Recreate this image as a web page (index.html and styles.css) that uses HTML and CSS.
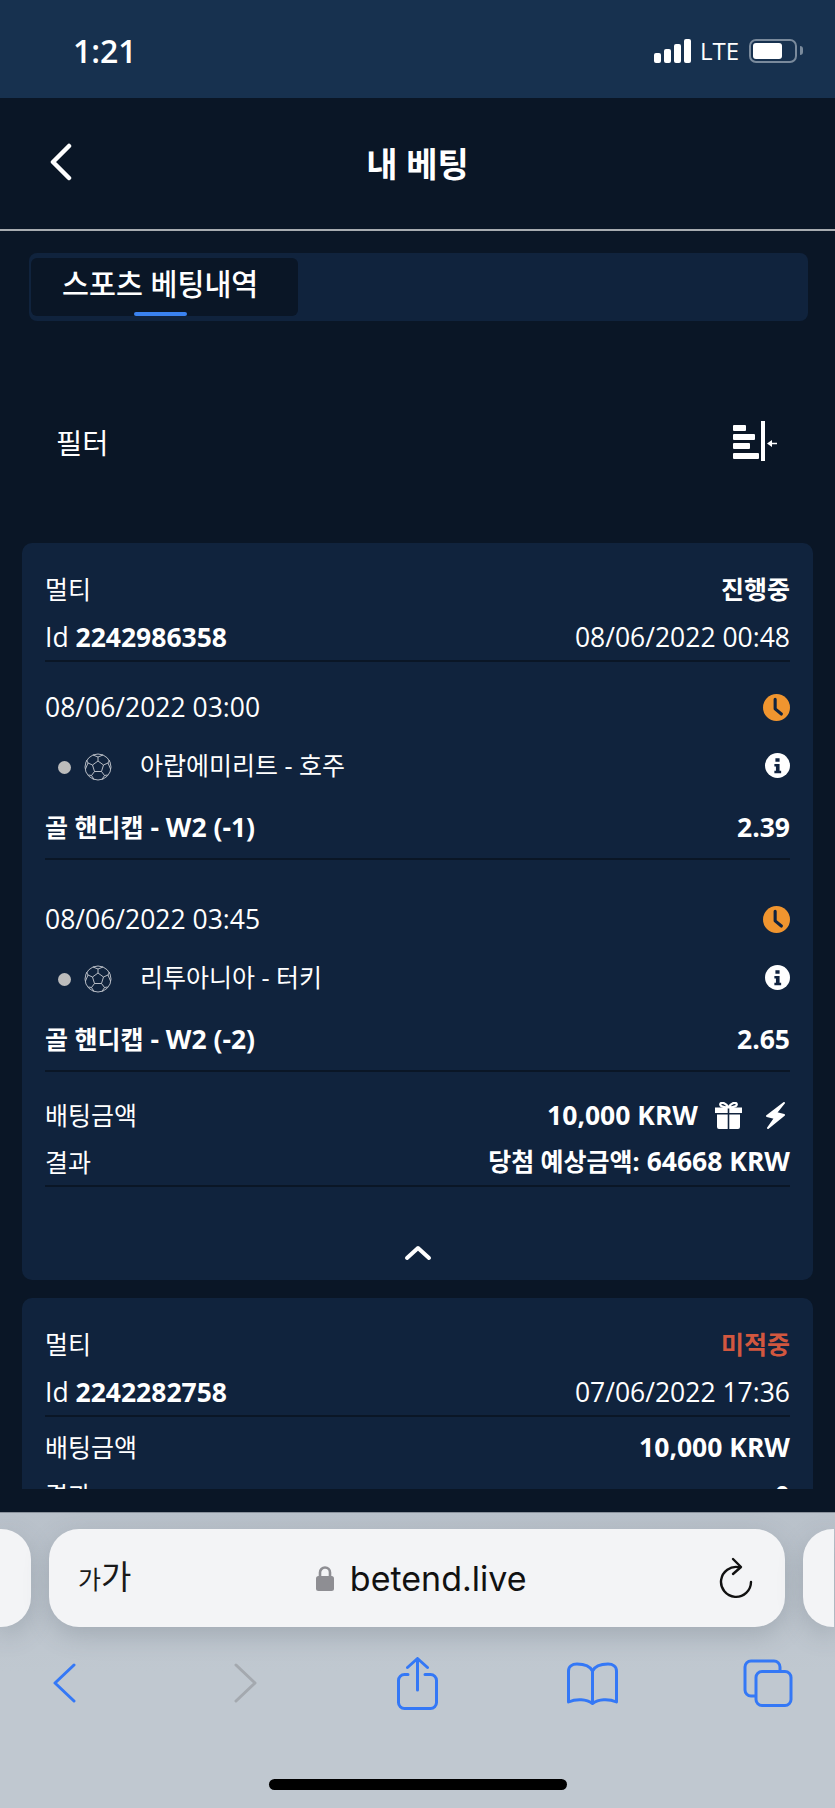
FILE: index.html
```html
<!doctype html>
<html lang="ko">

<head>
    <meta charset="UTF-8">
    <title>내 베팅</title>
    <link rel="stylesheet" href="styles.css">
</head>

<body>
    <div class="phone">
        <div class="status">
            <span class="time">1:21</span>
            <div class="status-right">
                <span class="signal"><i class="s1"></i><i class="s2"></i><i class="s3"></i><i class="s4"></i></span>
                <span class="lte">LTE</span>
                <span class="battery"><i></i></span>
                <span class="battery-cap"></span>
            </div>
        </div>

        <div class="nav">
            <svg class="nav-back" width="24" height="38" viewBox="0 0 24 38"><path d="M20 3 4 19l16 16" fill="none" stroke="#fff" stroke-width="4.500" stroke-linecap="round" stroke-linejoin="round"/></svg>
            <span class="nav-title">내 베팅</span>
        </div>

        <div class="content">
            <div class="scroll">
                <div class="tabs">
                    <div class="tab-on">스포츠 베팅내역<i></i></div>
                </div>

                <div class="filter">
                    <span>필터</span>
                    <svg width="46" height="42" viewBox="0 0 46 42" fill="#fff">
                        <rect x="1" y="5" width="13" height="6" rx="1"/>
                        <rect x="1" y="14" width="22" height="6" rx="1"/>
                        <rect x="1" y="23" width="17" height="6" rx="1"/>
                        <rect x="1" y="33" width="26" height="6" rx="1"/>
                        <rect x="29" y="1" width="4" height="40"/>
                        <path d="M35 23.500 40 20v2.700h5v1.600h-5V27z"/>
                    </svg>
                </div>

                <div class="card">
                    <div class="row"><span class="ko">멀티</span><b class="ko">진행중</b></div>
                    <div class="row row-id"><span>Id <b>2242986358</b></span><span>08/06/2022 00:48</span></div>
                    <div class="line"></div>

                    <div class="row match-date first-match"><span>08/06/2022 03:00</span>
                        <svg class="clock" width="27" height="27" viewBox="0 0 26 26"><circle cx="13" cy="13" r="13" fill="#f0952f"/><path d="M11.700 5v9.300l6 5" fill="none" stroke="#102340" stroke-width="3" stroke-linecap="round" stroke-linejoin="round"/></svg>
                    </div>
                    <div class="row match-team">
                        <span class="team">
                            <i class="dot"></i>
                            <svg class="ball" width="28" height="28" viewBox="0 0 28 28" fill="none" stroke="#c8ccd2" stroke-width=".9"><circle cx="14" cy="14" r="13"/><path d="m14 8 5.500 4-2 6.500h-7l-2-6.500zM14 8V4M19.500 12l4.500-2M17.500 18.500l3 4M10.500 18.500l-3 4M8.500 12 4 10M9 2l5 2 5-2M1.500 16 4 10l-1.500-3M26.500 16 24 10l1.500-3M7.500 22.500l-3-.5M7.500 22.500l2.500 4M20.500 22.500l3-.5M20.500 22.500l-2.500 4"/></svg>
                            <span class="team-name ko">아랍에미리트 - 호주</span>
                        </span>
                        <svg class="info" width="25" height="25" viewBox="0 0 24 24"><circle cx="12" cy="12" r="12" fill="#fff"/><path d="M10 5h4v3.500h-4zM9 10.500h5V17h1.500v2.500h-6.500V17h1.500v-4H9z" fill="#102340"/></svg>
                    </div>
                    <div class="row match-market"><b><span class="ko">골 핸디캡</span> - W2 (-1)</b><b>2.39</b></div>
                    <div class="line"></div>

                    <div class="row match-date next-match"><span>08/06/2022 03:45</span>
                        <svg class="clock" width="27" height="27" viewBox="0 0 26 26"><circle cx="13" cy="13" r="13" fill="#f0952f"/><path d="M11.700 5v9.300l6 5" fill="none" stroke="#102340" stroke-width="3" stroke-linecap="round" stroke-linejoin="round"/></svg>
                    </div>
                    <div class="row match-team">
                        <span class="team">
                            <i class="dot"></i>
                            <svg class="ball" width="28" height="28" viewBox="0 0 28 28" fill="none" stroke="#c8ccd2" stroke-width=".9"><circle cx="14" cy="14" r="13"/><path d="m14 8 5.500 4-2 6.500h-7l-2-6.500zM14 8V4M19.500 12l4.500-2M17.500 18.500l3 4M10.500 18.500l-3 4M8.500 12 4 10M9 2l5 2 5-2M1.500 16 4 10l-1.500-3M26.500 16 24 10l1.500-3M7.500 22.500l-3-.5M7.500 22.500l2.500 4M20.500 22.500l3-.5M20.500 22.500l-2.500 4"/></svg>
                            <span class="team-name ko">리투아니아 - 터키</span>
                        </span>
                        <svg class="info" width="25" height="25" viewBox="0 0 24 24"><circle cx="12" cy="12" r="12" fill="#fff"/><path d="M10 5h4v3.500h-4zM9 10.500h5V17h1.500v2.500h-6.500V17h1.500v-4H9z" fill="#102340"/></svg>
                    </div>
                    <div class="row match-market"><b><span class="ko">골 핸디캡</span> - W2 (-2)</b><b>2.65</b></div>
                    <div class="line"></div>

                    <div class="row stake">
                        <span class="ko">배팅금액</span>
                        <span class="stake-right"><b>10,000 KRW</b>
                            <svg class="gift" width="27" height="27" viewBox="0 0 27 27" fill="#fff"><path d="M0 5.500h12.700V11H0zM14.300 5.500H27V11H14.300zM2 12.500h10.700V27H4q-2 0-2-2zM14.300 12.500H25V25q0 2-2 2h-8.700z"/><path d="M13.500 5.500C11 1 7 0 5.500 1.500c-1 2 1 4 8 4zm0 0c2.500-4.500 6.500-5.500 8-4 1 2-1 4-8 4z" fill="none" stroke="#fff" stroke-width="2.200"/></svg>
                            <svg class="bolt" width="19" height="27" viewBox="0 0 19 27"><path d="M18 1 1 14l8 2-7 10 16-13-8-2z" fill="#fff" stroke="#fff" stroke-width="2" stroke-linejoin="round"/></svg>
                        </span>
                    </div>
                    <div class="row row-result"><span class="ko">결과</span><b><span class="ko">당첨 예상금액:</span> 64668 KRW</b></div>
                    <div class="line"></div>

                    <div class="card-toggle">
                        <svg width="28" height="16" viewBox="0 0 28 16"><path d="m3 13 11-10 11 10" fill="none" stroke="#fff" stroke-width="4" stroke-linecap="round" stroke-linejoin="round"/></svg>
                    </div>
                </div>

                <div class="card">
                    <div class="row"><span class="ko">멀티</span><b class="ko lost">미적중</b></div>
                    <div class="row row-id"><span>Id <b>2242282758</b></span><span>07/06/2022 17:36</span></div>
                    <div class="line"></div>
                    <div class="row stake-short"><span class="ko">배팅금액</span><b>10,000 KRW</b></div>
                    <div class="row"><span class="ko">결과</span><b>0</b></div>
                </div>
            </div>
        </div>

        <div class="toolbar">
            <div class="url-row">
                <div class="url-side left"></div>
                <div class="url">
                    <span class="aa"><small>가</small>가</span>
                    <span class="domain">
                        <svg width="18" height="26" viewBox="0 0 18 26"><path d="M4 12V7.500a5 5 0 0 1 10 0V12" fill="none" stroke="#8e8e93" stroke-width="2.600"/><rect y="11" width="18" height="15" rx="2.500" fill="#8e8e93"/></svg>
                        betend.live
                    </span>
                    <svg width="34" height="42" viewBox="0 0 34 42" fill="none" stroke="#111" stroke-width="2.400" stroke-linecap="round" stroke-linejoin="round"><path d="M20 10.200A15 15 0 1 0 32 25"/><path d="M14 2l8 8-8 7"/></svg>
                </div>
                <div class="url-side right"></div>
            </div>
            <div class="tools">
                <svg class="t-back" width="23" height="40" viewBox="0 0 23 40"><path d="M21 2 2 20l19 18" fill="none" stroke="#3478f6" stroke-width="3" stroke-linecap="round" stroke-linejoin="round"/></svg>
                <svg class="t-next" width="23" height="40" viewBox="0 0 23 40"><path d="M2 2l19 18L2 38" fill="none" stroke="#a4a9af" stroke-width="3" stroke-linecap="round" stroke-linejoin="round"/></svg>
                <svg class="t-share" width="41" height="53" viewBox="0 0 41 53" fill="none" stroke="#3478f6" stroke-width="3" stroke-linecap="round" stroke-linejoin="round"><path d="M11 17.500H7.500a6 6 0 0 0-6 6V45.500a6 6 0 0 0 6 6h26a6 6 0 0 0 6-6V23.500a6 6 0 0 0-6-6H28M20.500 33V2M10.500 10.500l10-9 10 9"/></svg>
                <svg class="t-book" width="51" height="43" viewBox="0 0 51 43" fill="none" stroke="#3478f6" stroke-width="3" stroke-linecap="round" stroke-linejoin="round"><path d="M25.500 9C23 4 18 2 10 2 5 2 1.500 4.500 1.500 9v31c8-3.500 18-3 24 1.500 6-4.500 16-5 24-1.500V9c0-4.500-3.500-7-8.500-7-8 0-13 2-15.500 7zm0 0v32"/></svg>
                <svg class="t-tabs" width="50" height="48" viewBox="0 0 50 48" fill="none" stroke="#3478f6" stroke-width="3" stroke-linejoin="round"><path d="M12 37H8a6 6 0 0 1-6-6V8a6 6 0 0 1 6-6h23a6 6 0 0 1 6 6v4"/><rect x="13" y="12.500" width="35" height="34" rx="6"/></svg>
            </div>
            <div class="home-bar"></div>
        </div>
    </div>
</body>

</html>
```

FILE: styles.css
```css
* {
    margin: 0;
    padding: 0;
    box-sizing: border-box;
}

body {
    background: #0a1626;
    font-family: "Open Sans", "Noto Sans CJK KR", sans-serif;
    color: #fff;
}

i {
    display: block;
}

.phone {
    display: flex;
    flex-direction: column;
    width: 835px;
    height: 1808px;
    overflow: hidden;
}

/* status bar */
.status {
    display: flex;
    justify-content: space-between;
    align-items: center;
    flex: none;
    height: 98px;
    padding: 3px 32px 0 73px;
    background: #17314f;
}

.time {
    font-size: 32px;
    font-weight: 600;
}

.status-right {
    display: flex;
    align-items: center;
}

.signal {
    display: flex;
    align-items: flex-end;
    gap: 3px;
    height: 24px;
}

.signal i {
    width: 7px;
    background: #fff;
    border-radius: 2px;
}

.s1 { height: 10px; }
.s2 { height: 14px; }
.s3 { height: 19px; }
.s4 { height: 24px; }

.lte {
    margin: 0 10px 0 9px;
    font-size: 24px;
    line-height: 24px;
}

.battery {
    display: block;
    width: 48px;
    height: 24px;
    padding: 2px;
    border: 2px solid #7a8a9c;
    border-radius: 7px;
}

.battery i {
    width: 29px;
    height: 16px;
    background: #fff;
    border-radius: 3px;
}

.battery-cap {
    width: 3px;
    height: 9px;
    margin-left: 3px;
    background: #7a8a9c;
    border-radius: 0 3px 3px 0;
}

/* header */
.nav {
    display: flex;
    align-items: center;
    justify-content: center;
    position: relative;
    flex: none;
    height: 133px;
    background: #0a1626;
    border-bottom: 2px solid #a8acb0;
}

.nav-back {
    position: absolute;
    top: 45px;
    left: 49px;
}

.nav-title {
    margin-bottom: 2px;
    font-size: 34px;
    font-weight: 700;
}

/* content */
.content {
    flex: none;
    height: 1281px;
    padding-bottom: 23px;
    background: #0a1626;
}

.scroll {
    height: 100%;
    padding: 22px 22px 0;
    overflow: hidden;
}

.tabs {
    height: 68px;
    margin: 0 5px 0 7px;
    padding: 5px 2px;
    background: #10233d;
    border-radius: 8px;
}

.tab-on {
    position: relative;
    width: 267px;
    height: 58px;
    padding-left: 31px;
    background: #0a1626;
    border-radius: 6px;
    font-size: 29.300px;
    font-weight: 500;
    line-height: 53px;
}

.tab-on i {
    position: absolute;
    bottom: 0;
    left: 103px;
    width: 53px;
    height: 4px;
    background: #3a82f0;
    border-radius: 2px;
}

.filter {
    display: flex;
    justify-content: space-between;
    align-items: center;
    height: 90px;
    margin: 75px 0 57px;
    padding: 0 35px 0 34px;
    font-size: 28.500px;
}

/* bet cards */
.card {
    margin-bottom: 18px;
    padding: 22px 23px 0;
    background: #10233d;
    border-radius: 10px;
    font-size: 26.500px;
}

.ko {
    margin-bottom: 3px;
    font-size: 25px;
}

.row {
    display: flex;
    justify-content: space-between;
    align-items: center;
    height: 48px;
}

.row-id {
    height: 47px;
}

.line {
    height: 2px;
    background: #0a1626;
}

.match-date {
    height: 46px;
}

.first-match {
    margin-top: 22px;
}

.next-match {
    margin-top: 36px;
}

.match-team {
    height: 70px;
}

.match-market {
    height: 56px;
    margin-bottom: 2px;
}

.match-market b,
.row-result b {
    margin-bottom: 3px;
}

.team {
    display: flex;
    align-items: center;
    padding-left: 13px;
}

.dot {
    width: 13px;
    height: 13px;
    margin-top: 4px;
    margin-right: 13px;
    background: #bcbcbc;
    border-radius: 50%;
}

.ball {
    margin-top: 4px;
}

.team-name {
    margin-left: 28px;
}

.stake {
    margin-top: 19px;
}

.stake-right {
    display: flex;
    align-items: center;
}

.gift {
    margin-left: 17px;
}

.bolt {
    margin: 0 5px 0 24px;
}

.row-result {
    height: 46px;
}

.card-toggle {
    display: flex;
    justify-content: center;
    height: 93px;
    padding-top: 58px;
}

.lost {
    color: #d2573f;
}

.stake-short {
    margin-top: 6px;
}

/* safari toolbar */
.toolbar {
    flex: none;
    height: 296px;
    background: linear-gradient(#b9c1ca, #c0c8d0 160px);
    border-top: 1px solid #8a929c;
}

.url-row {
    display: flex;
    gap: 18px;
    height: 98px;
    margin-top: 16px;
}

.url,
.url-side {
    height: 98px;
    background: #f3f4f6;
    box-shadow: 0 8px 24px rgba(80, 90, 105, .25);
}

.url {
    display: flex;
    justify-content: space-between;
    align-items: center;
    flex: none;
    width: 736px;
    padding: 0 32px 0 29px;
    border-radius: 30px;
}

.url-side {
    flex: none;
    width: 31px;
}

.left {
    border-radius: 0 30px 30px 0;
}

.right {
    border-radius: 30px 0 0 30px;
}

.aa {
    color: #1a1a1a;
    font-size: 33px;
    line-height: 40px;
}

.aa small {
    font-size: 25px;
}

.domain {
    display: flex;
    align-items: center;
    gap: 16px;
    margin-right: 8px;
    color: #111;
    font-family: "Inter", sans-serif;
    font-size: 34px;
}

.tools {
    display: flex;
    align-items: center;
    height: 86px;
    margin-top: 13px;
    padding-left: 53px;
}

.t-next {
    margin-left: 158px;
}

.t-share {
    margin-left: 140px;
}

.t-book {
    margin-left: 129px;
}

.t-tabs {
    margin-left: 125px;
}

.home-bar {
    width: 298px;
    height: 11px;
    margin: 53px 0 0 269px;
    background: #000;
    border-radius: 6px;
}
```
